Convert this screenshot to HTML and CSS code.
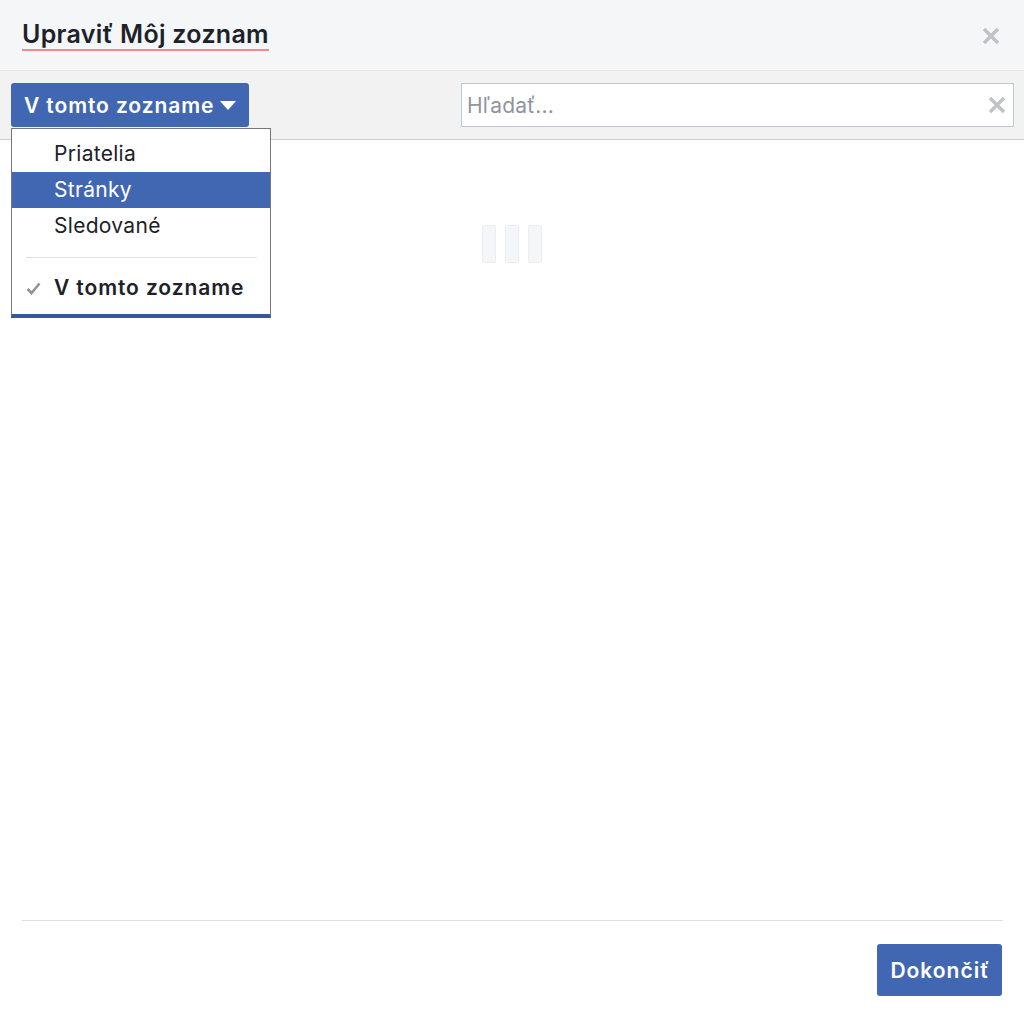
FILE: index.html
```html
<!DOCTYPE html>
<html lang="sk">
<head>
<meta charset="UTF-8" />
<meta name="viewport" content="width=device-width, initial-scale=1" />
<title>Upraviť Môj zoznam</title>
<link rel="stylesheet" href="styles.css">
</head>
<body>
  <div class="dialog">
    <div class="dialog-head">
      <h2><span class="title">Upraviť Môj zoznam</span></h2>
      <svg class="close" width="18" height="18" viewBox="0 0 18 18"><path d="M2 2L16 16M16 2L2 16" stroke="#bec2c9" stroke-width="3.4"/></svg>
    </div>

    <div class="toolbar">
      <div class="filter">
        <button class="filter-btn">V tomto zozname <span class="caret"></span></button>
        <ul class="menu">
          <li>Priatelia</li>
          <li class="active">Stránky</li>
          <li>Sledované</li>
          <li class="sep"></li>
          <li class="checked">
            <svg class="check" width="15" height="13" viewBox="0 0 15 13"><path d="M1.5 7L5.5 11L13.5 1.5" fill="none" stroke="#8d949e" stroke-width="2.6"/></svg>
            V tomto zozname
          </li>
        </ul>
      </div>
      <div class="search">
        <input type="text" placeholder="Hľadať..." />
        <svg class="clear" width="18" height="18" viewBox="0 0 18 18"><path d="M2 2L16 16M16 2L2 16" stroke="#bec2c9" stroke-width="3.4"/></svg>
      </div>
    </div>

    <div class="dialog-body">
      <div class="loader">
        <span></span><span></span><span></span>
      </div>
    </div>

    <div class="dialog-foot">
      <button class="done">Dokončiť</button>
    </div>
  </div>
</body>
</html>
```

FILE: styles.css
```css
* {
  margin: 0; padding: 0; box-sizing: border-box;
}
body {
  font-family: Inter, "Liberation Sans", Arial, sans-serif;
  background: #fff;
  color: #1d2129;
}
.dialog {
  width: 1024px;
  height: 1018px;
  display: flex;
  flex-direction: column;
}
.dialog-head {
  height: 71px;
  background: #f5f6f7;
  border-bottom: 1px solid #e5e5e5;
  display: flex;
  align-items: center;
  justify-content: space-between;
  padding: 0 24px 0 22px;
}
.dialog-head h2 {
  font-size: 25px;
  font-weight: 600;
  letter-spacing: 0.3px;
  color: #1d2129;
  padding-bottom: 2px;
}
.title {
  text-decoration: underline;
  text-decoration-color: #f08a8a;
  text-decoration-thickness: 2px;
  text-decoration-skip-ink: none;
  text-underline-offset: 6px;
}
.close {
  display: block;
  margin-top: 2px;
}
.toolbar {
  height: 69px;
  background: #f2f2f2;
  border-bottom: 1px solid #ccd0d5;
  display: flex;
  justify-content: space-between;
  align-items: center;
  padding: 0 10px 0 11px;
}
.filter {
  position: relative;
}
.filter-btn {
  height: 44px;
  width: 238px;
  background: #4267b2;
  color: #fff;
  border: none;
  border-radius: 3px;
  font-family: inherit;
  font-size: 21px;
  font-weight: 600;
  letter-spacing: 0.9px;
  padding: 0 12px 0 13px;
  text-align: left;
  display: flex;
  align-items: center;
  gap: 6px;
}
.caret {
  width: 0; height: 0;
  border-left: 8px solid transparent;
  border-right: 8px solid transparent;
  border-top: 9px solid #fff;
}
.menu {
  position: absolute;
  top: 45px;
  left: 0;
  width: 260px;
  list-style: none;
  background: #fff;
  border: 1px solid #777;
  border-bottom: 4px solid #365899;
  padding: 7px 0 8px;
  z-index: 10;
}
.menu li {
  height: 36px;
  line-height: 36px;
  font-size: 21px;
  letter-spacing: 0.3px;
  padding-left: 42px;
  color: #1d2129;
}
.menu li.active {
  background: #4267b2;
  color: #fff;
}
.menu li.sep {
  height: 1px;
  margin: 13px 13px 12px 14px;
  background: #dddfe2;
}
.menu li.checked {
  font-weight: 600;
  letter-spacing: 0.9px;
  padding-left: 14px;
  display: flex;
  align-items: center;
  gap: 13px;
}
.search {
  position: relative;
  width: 553px;
}
.search input {
  width: 100%;
  height: 44px;
  border: 1px solid #bdc7d8;
  background: #fff;
  font-family: inherit;
  font-size: 21px;
  letter-spacing: 0.2px;
  padding: 0 36px 0 5px;
  color: #1d2129;
  outline: none;
}
.search input::placeholder {
  color: #90949c;
}
.clear {
  position: absolute;
  right: 8px;
  top: 13px;
}
.dialog-body {
  flex: 1;
  display: flex;
  justify-content: center;
  padding-top: 85px;
}
.loader {
  display: flex;
  gap: 9px;
  height: 38px;
}
.loader span {
  width: 14px;
  height: 38px;
  background: #f5f6f7;
  border: 1px solid #eceef1;
  border-radius: 2px;
}
.dialog-foot {
  margin: 0 21px 0 22px;
  border-top: 1px solid #dddfe2;
  padding: 23px 0 22px;
  display: flex;
  justify-content: flex-end;
}
.done {
  height: 52px;
  padding: 0 12px 0 13px;
  background: #4267b2;
  color: #fff;
  border: none;
  border-radius: 3px;
  font-family: inherit;
  font-size: 21px;
  font-weight: 600;
  letter-spacing: 1px;
  margin-right: 1px;
}
```
